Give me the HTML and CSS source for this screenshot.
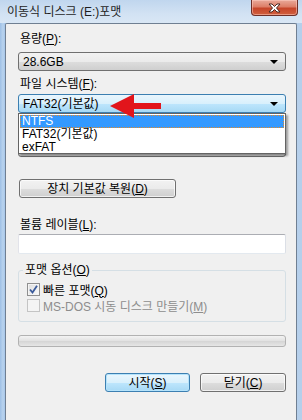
FILE: index.html
```html
<!DOCTYPE html>
<html lang="ko">
<head>
<meta charset="utf-8">
<link rel="stylesheet" href="styles.css">
</head>
<body>
<div class="window">
  <div class="titlebar">
    <div class="title">이동식 디스크 (E:)포맷</div>
    <div class="close">
      <svg width="17" height="10" viewBox="0 0 17 10"><path d="M3 1 L6 1 L8.5 3.5 L11 1 L14 1 L10.5 5 L14 9 L11 9 L8.5 6.5 L6 9 L3 9 L6.5 5 Z" fill="#fff" stroke="#4a2a24" stroke-width="1" stroke-linejoin="round"/></svg>
    </div>
  </div>
  <div class="client">
    <div class="label l1">용량(<u>P</u>):</div>
    <div class="combo c1"><span>28.6GB</span><i class="arrow"></i></div>
    <div class="label l2">파일 시스템(<u>F</u>):</div>
    <div class="combo c2 hot"><span>FAT32(기본값)</span><i class="arrow"></i>
      <div class="dropdown">
        <div class="opt sel">NTFS</div>
        <div class="opt">FAT32(기본값)</div>
        <div class="opt">exFAT</div>
      </div>
      <svg class="redarrow" width="52" height="26" viewBox="0 0 52 26"><path d="M0 13 L24 1 L24 10 L51 10 L51 16 L24 16 L24 25 Z" fill="#e2151b"/></svg>
    </div>
    <div class="label l3"></div>
    <div class="combo c3"></div>
    <button class="btn reset">장치 기본값 복원(<u>D</u>)</button>
    <div class="label l4">볼륨 레이블(<u>L</u>):</div>
    <div class="input"></div>
    <fieldset class="group">
      <legend>포맷 옵션(<u>O</u>)</legend>
      <div class="check"><i class="box on"><svg width="9" height="9" viewBox="0 0 9 9"><path d="M1 4.5 L3.5 7.5 L8 0.8" fill="none" stroke="#3a5a9a" stroke-width="1.8"/></svg></i><span>빠른 포맷(<u>Q</u>)</span></div>
      <div class="check dis"><i class="box"></i><span>MS-DOS 시동 디스크 만들기(<u>M</u>)</span></div>
    </fieldset>
    <div class="progress"></div>
    <div class="buttons">
      <button class="btn start">시작(<u>S</u>)</button>
      <button class="btn close-btn">닫기(<u>C</u>)</button>
    </div>
  </div>
</div>
</body>
</html>
```
FILE: styles.css
```css
* { box-sizing: border-box; }
html, body { margin: 0; padding: 0; }
body {
  width: 302px; height: 420px; overflow: hidden;
  font-family: "Liberation Sans", "Noto Sans CJK KR", sans-serif;
  font-size: 12px; color: #000;
  background: linear-gradient(90deg, #9ec0e6 0, #b9d3ee 3px, #a6c6ea 5px, #cfe0f2 40%, #b5cfeb 100%);
}
.window { display: flex; flex-direction: column; height: 420px; }
.titlebar {
  height: 23px; display: flex; justify-content: space-between; align-items: flex-start;
  background: linear-gradient(180deg, #c0d6ee 0, #d2e2f3 60%, #d9e7f5 100%);
}
.title { padding: 5px 0 0 7px; line-height: 14px; color: #1e1e1e; }
.close {
  width: 47px; height: 16px; margin-right: 4px;
  border: 1px solid #6d2f28; border-top: none; border-radius: 0 0 4px 4px;
  background: linear-gradient(180deg, #e9a99a 0, #dd7e68 45%, #c6452a 55%, #d0603e 100%);
  box-shadow: inset 0 0 0 1px rgba(255,210,200,0.5);
  display: flex; align-items: center; justify-content: center;
}
.client {
  flex: 1; margin: 0 5px 0 5px;
  border: 1px solid #6f7f92; border-bottom: none; border-radius: 2px 2px 0 0;
  background: #f0f0f0;
  padding: 0 10px 0 12px;
  display: flex; flex-direction: column;
}
.label { height: 14px; line-height: 14px; white-space: nowrap; }
.l1 { margin-top: 8px; padding-left: 2px; }
.l2 { margin-top: 6px; padding-left: 2px; }
.l3 { margin-top: 7px; }
.l4 { margin-top: 20px; padding-left: 2px; }
u { text-decoration: underline; text-underline-offset: 1px; }
.combo {
  position: relative; height: 19px; margin-top: 6px;
  border: 1px solid #707070; border-radius: 3px;
  background: linear-gradient(180deg, #f2f2f2 0, #ebebeb 50%, #dddddd 51%, #cfcfcf 100%);
  display: flex; align-items: center; padding: 0 0 0 4px;
}
.combo span { flex: 1; line-height: 14px; }
.arrow {
  width: 0; height: 0; margin-right: 7px;
  border-left: 4px solid transparent; border-right: 4px solid transparent; border-top: 4px solid #000;
}
.c2 { margin-top: 3px; }
.c3 { margin-top: 4px; }
.combo.hot {
  border-color: #3c7fb1;
  background: linear-gradient(180deg, #eaf6fd 0, #d9f0fc 50%, #bee6fd 51%, #a7d9f5 100%);
}
.dropdown {
  position: absolute; left: -1px; right: -1px; top: 18px; height: 41px;
  border: 1px solid #646464; background: #fff;
  box-shadow: 2px 2px 2px rgba(0,0,0,0.35);
  padding: 1px 1px; z-index: 5;
}
.opt { height: 13px; line-height: 13px; padding-left: 2px; }
.opt.sel { background: #3399ff; color: #fff; outline: 1px dotted #e08a2c; outline-offset: -1px; }
.redarrow { position: absolute; left: 91px; top: -2px; z-index: 6; }
.btn {
  font: inherit; color: #000; padding: 0; height: 19px; line-height: 14px;
  border: 1px solid #707070; border-radius: 3px;
  background: linear-gradient(180deg, #f2f2f2 0, #ebebeb 50%, #dddddd 51%, #cfcfcf 100%);
  box-shadow: inset 0 0 0 1px rgba(255,255,255,0.7);
}
.reset { align-self: flex-start; width: 157px; margin-top: 22px; margin-left: 1px; }
.input {
  height: 20px; margin-top: 2px; background: #fff;
  border: 1px solid #abadb3; border-left-color: #e2e3ea; border-right-color: #dbdfe6; border-bottom-color: #e3e9ef;
  border-radius: 2px;
}
.group {
  margin: 9px 0 0 0; padding: 5px 8px 9px 8px;
  border: 1px solid #d5dfe5; border-radius: 3px; min-width: 0;
}
.group legend { padding: 0 2px; margin-left: -4px; line-height: 14px; }
.check { display: flex; align-items: center; height: 14px; gap: 3px; }
.check + .check { margin-top: 2px; }
.box {
  width: 13px; height: 13px; border: 1px solid #8f8f8f;
  background: linear-gradient(135deg, #dcdcdc 0, #fbfbfb 100%);
  box-shadow: inset 0 0 0 1px #f4f4f4;
  display: flex; align-items: center; justify-content: center;
}
.dis { color: #8d8d8d; }
.dis .box { border-color: #c4c4c4; background: #f4f4f4; box-shadow: none; }
.progress {
  height: 12px; margin-top: 13px;
  border: 1px solid #b2b2b2; border-radius: 3px;
  background: linear-gradient(180deg, #f3f3f3 0, #e3e3e3 45%, #d6d6d6 55%, #e6e6e6 100%);
}
.buttons { display: flex; justify-content: flex-end; gap: 10px; margin-top: 26px; }
.start { width: 85px; border-color: #3c7fb1;
  background: linear-gradient(180deg, #eaf6fd 0, #d9f0fc 50%, #bee6fd 51%, #a7d9f5 100%);
  box-shadow: inset 0 0 0 1px #b5e3fb;
}
.close-btn { width: 86px; }
```
